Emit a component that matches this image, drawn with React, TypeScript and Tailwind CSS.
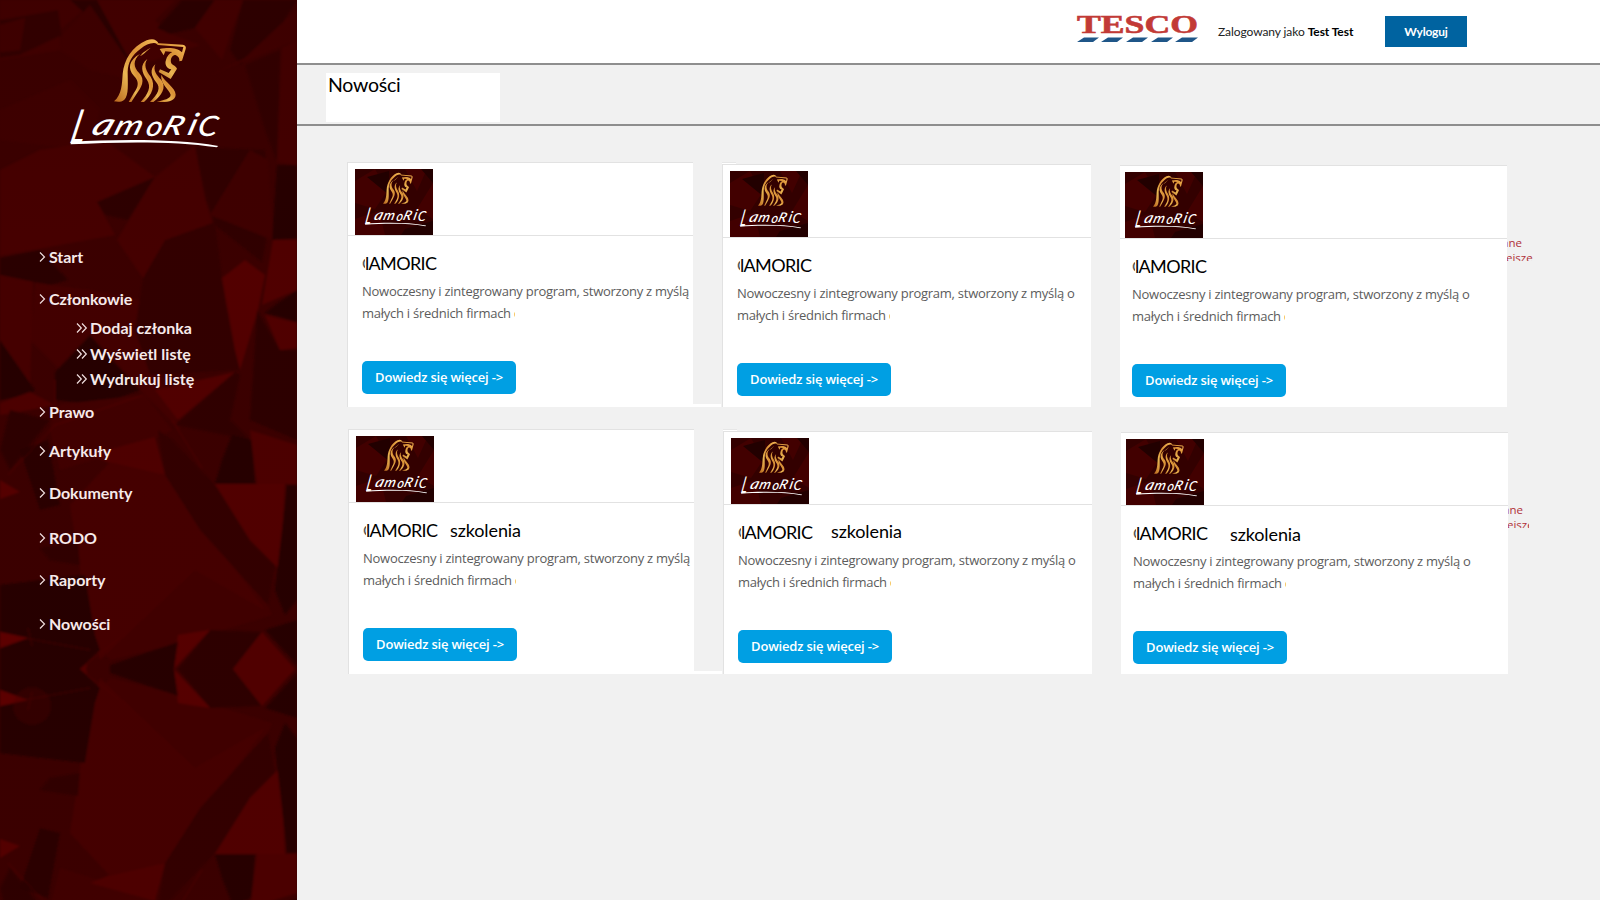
import React from "react";

const FACETS: [string, string][] = [
  ["#450000", "0,0 95,0 60,30 60,50 0,60"],
  ["#2c0000", "0,20 58,10 62,35 20,55 0,58"],
  ["#420000", "0,25 25,18 20,50 0,52"],
  ["#1c0000", "70,0 105,0 125,38 128,60 108,35"],
  ["#4a0000", "97,0 175,0 155,20 165,32 200,45 150,62 127,55"],
  ["#400000", "62,35 90,5 126,58 135,80 90,70 60,50"],
  ["#1f0000", "157,28 182,0 215,0 195,28 170,34"],
  ["#480000", "195,28 215,0 243,0 230,35 222,60"],
  ["#230000", "243,0 297,0 275,35 240,65 230,50"],
  ["#430000", "297,10 297,40 210,75 245,58 280,25"],
  ["#470000", "282,48 297,40 297,165 277,162"],
  ["#2b0000", "245,65 280,50 277,162 265,130"],
  ["#400000", "0,110 70,80 100,110 90,150 0,140"],
  ["#4b0000", "0,170 40,150 105,140 155,177 97,202 115,235 0,256"],
  ["#260000", "97,202 155,177 128,220 105,215"],
  ["#4a0000", "155,177 195,145 205,200 213,225 143,278 117,240"],
  ["#2a0000", "195,147 265,150 270,220 262,262 215,225 205,195"],
  ["#410000", "210,215 250,150 268,160 273,240"],
  ["#1d0000", "277,165 297,165 297,238 272,240"],
  ["#230000", "0,258 40,250 68,280 50,285 0,275"],
  ["#440000", "35,283 90,290 140,300 150,340 180,430 100,350 60,370 30,340"],
  ["#2e0000", "143,278 165,240 215,222 225,300 240,370 150,375 135,330"],
  ["#5c0000", "222,278 245,260 265,275 258,310 240,370 235,350"],
  ["#580000", "273,240 297,240 297,290 262,305"],
  ["#1f0000", "297,290 275,305 265,313 297,322"],
  ["#580000", "265,315 297,323 297,348 280,350"],
  ["#270000", "257,310 280,350 297,350 297,440 250,420"],
  ["#480000", "0,275 33,282 30,390 0,340"],
  ["#1e0000", "0,340 35,390 30,395 0,400"],
  ["#520000", "0,403 30,392 55,405 30,410 0,415"],
  ["#1f0000", "55,372 90,335 140,390 100,405 55,400"],
  ["#5a0000", "155,390 235,372 178,420"],
  ["#290000", "235,372 240,375 230,420 250,440 175,425"],
  ["#420000", "55,405 145,395 172,430 140,445 60,470 50,430"],
  ["#250000", "10,410 50,420 10,470 0,450"],
  ["#230000", "20,450 48,440 60,505 40,510"],
  ["#560000", "90,455 155,437 165,475 115,465"],
  ["#600000", "0,480 20,492 0,499"],
  ["#420000", "165,475 200,530 268,605 272,615 190,640 110,660 80,620 120,560"],
  ["#4a0000", "70,505 110,462 165,475 265,610 195,570 100,660 85,600"],
  ["#2e0000", "158,430 172,440 215,485 275,565 268,605 200,530 165,475"],
  ["#5a0000", "215,484 255,484 285,484 280,570 250,540"],
  ["#1f0000", "232,435 252,440 255,484 215,484 222,460"],
  ["#520000", "250,430 297,445 297,484 257,484"],
  ["#1d0000", "287,485 297,485 297,600 285,615 275,590"],
  ["#2a0000", "40,548 78,542 80,565 50,560"],
  ["#1b0000", "0,585 85,575 95,635 100,650 80,669 0,669"],
  ["#6c0000", "0,632 28,638 0,648"],
  ["#260000", "210,630 262,632 235,669 178,669"],
  ["#620000", "178,635 210,630 174,669"],
  ["#1f0000", "110,665 178,642 174,669 110,669"],
  ["#5a0000", "262,632 295,669 233,669"],
  ["#1e0000", "265,630 297,620 297,665"],
  ["#5a0000", "80,669 140,622 88,662 86,669"],
];

function Facets() {
  return (
    <>
      {FACETS.map(([fill, points], i) => (
        <polygon key={i} fill={fill} points={points} />
      ))}
      <g stroke="#780000" strokeWidth="0.7" opacity="0.6" fill="none">
        <path d="M8 475 55 425 143 395M172 420l30 48M25 638l65 12M55 405l0-25M28 628l4 18" />
      </g>
    </>
  );
}

function SidebarBackground() {
  return (
    <svg className="absolute inset-0" width="297" height="900" viewBox="0 0 297 900" aria-hidden="true">
      <defs>
        <filter id="soft" x="0" y="0" width="1" height="1">
          <feGaussianBlur stdDeviation="1.3" />
        </filter>
        <linearGradient id="shade" x1="0" y1="0" x2="0" y2="1">
          <stop offset="0" stopColor="#380000" stopOpacity="0.5" />
          <stop offset="0.3" stopColor="#3c0000" stopOpacity="0.3" />
          <stop offset="1" stopColor="#3c0000" stopOpacity="0.35" />
        </linearGradient>
      </defs>
      <rect width="297" height="900" fill="#3a0000" />
      <g filter="url(#soft)">
        <Facets />
        <g transform="translate(0 1338) scale(1 -1)">
          <Facets />
        </g>
        <circle cx="32" cy="706" r="19" fill="#500000" opacity="0.35" />
      </g>
      <rect width="297" height="900" fill="url(#shade)" />
    </svg>
  );
}

const WORDMARK: { ch: string; size: number; place: string }[] = [
  { ch: "L", size: 140, place: "translate(207 430) skewX(-14) scale(.62 1)" },
  { ch: "a", size: 92, place: "translate(270 406) skewX(-22) scale(1.3 1)" },
  { ch: "m", size: 84, place: "translate(338 406) skewX(-18) scale(1.25 1)" },
  { ch: "o", size: 84, place: "translate(434 408) skewX(-12) scale(1.12 1)" },
  { ch: "R", size: 80, place: "translate(482 406) skewX(-20) scale(1.28 1)" },
  { ch: "i", size: 92, place: "translate(559 406) skewX(-16) scale(1.15 1)" },
  { ch: "C", size: 84, place: "translate(590 408) skewX(-10) scale(1.12 1)" },
];

function LogoArt() {
  return (
    <>
      <g fill="url(#gold)">
        <path d="M342 304C366 284 366 250 368 222C372 180 395 140 440 121C458 114 470 118 476 131C455 125 440 132 422 146C395 165 384 188 383 215C383 250 387 285 373 299C364 307 352 306 342 304Z" />
        <path d="M466 129L548 134Q560 136 557 147L546 182L538 184C540 172 530 165 524 165C514 168 510 180 514 190C518 197 526 196 531 206L512 237L476 216L480 208L506 219L514 208C500 206 493 192 498 180C500 170 508 160 517 156L496 154L491 166L479 147C500 143 530 141 546 157L550 141L474 135Z" />
        <path d="M420 162C398 180 400 202 418 220C436 240 426 262 408 284L394 306L386 306L402 278C416 260 418 244 402 228C382 206 386 180 420 162Z" />
        <path d="M452 143C424 158 412 176 428 164Z" />
        <path d="M442 177C430 194 438 212 452 230C468 256 456 284 432 306L422 306C444 282 456 262 440 238C426 218 418 194 442 177Z" />
        <path d="M466 193C458 210 470 226 484 240C500 262 486 286 460 306L450 306C474 282 484 264 468 246C454 228 448 208 466 193Z" />
        <path d="M484 224C494 246 526 262 527 284C526 306 496 307 470 305C492 300 512 296 512 284C508 268 480 252 484 224Z" />
      </g>
      <g fill="#ffffff" fontFamily="Lato, sans-serif" fontStyle="italic" fontWeight="500">
        {WORDMARK.map((l) => (
          <text key={l.ch} fontSize={l.size} transform={l.place}>
            {l.ch}
          </text>
        ))}
      </g>
      <path fill="#ffffff" d="M212 425C350 419 520 415 655 438L650 442C520 422 350 426 212 433Z" />
    </>
  );
}

function GoldDefs() {
  return (
    <defs>
      <linearGradient id="gold" x1="0" y1="1" x2="1" y2="0">
        <stop offset="0" stopColor="#b8651c" />
        <stop offset="0.35" stopColor="#eab653" />
        <stop offset="0.6" stopColor="#d98f35" />
        <stop offset="1" stopColor="#f6bb58" />
      </linearGradient>
    </defs>
  );
}

function Logo() {
  return (
    <svg className="relative block h-[160px] w-[297px]" viewBox="0 0 891 480" role="img">
      <GoldDefs />
      <LogoArt />
    </svg>
  );
}

function Thumb() {
  return (
    <svg className="block h-[66px] w-[78px] shrink-0" viewBox="0 0 78 66" role="img">
      <rect width="78" height="66" fill="#330000" />
      <path fill="#420000" d="M0 12 20 0 32 22 20 40 0 34ZM50 0H72L62 22ZM78 14V50L62 40ZM0 50 24 42 30 66H0Z" />
      <path fill="#220000" d="M12 8 34 2 34 26ZM66 0H78V14ZM50 60 78 52V66H46Z" />
      <g transform="translate(-19 -15.700) scale(.1375 .1650)">
        <LogoArt />
      </g>
    </svg>
  );
}

const NAV: { label: string; sub?: boolean; cls: string }[] = [
  { label: "Start", cls: "mt-[87px] pl-[39px]" },
  { label: "Członkowie", cls: "mt-[22px] pl-[39px]" },
  { label: "Dodaj członka", sub: true, cls: "mt-[9px] pl-[76px]" },
  { label: "Wyświetl listę", sub: true, cls: "mt-[6px] pl-[76px]" },
  { label: "Wydrukuj listę", sub: true, cls: "mt-[5px] pl-[76px]" },
  { label: "Prawo", cls: "mt-[13px] pl-[39px]" },
  { label: "Artykuły", cls: "mt-[19px] pl-[39px]" },
  { label: "Dokumenty", cls: "mt-[22px] pl-[39px]" },
  { label: "RODO", cls: "mt-[25px] pl-[39px]" },
  { label: "Raporty", cls: "mt-[22px] pl-[39px]" },
  { label: "Nowości", cls: "mt-[24px] pl-[39px]" },
];

function Sidebar() {
  return (
    <aside className="relative h-[900px] w-[297px] shrink-0 overflow-hidden">
      <SidebarBackground />
      <Logo />
      <nav className="relative flex flex-col">
        {NAV.map((item) => (
          <a key={item.label} className={"flex h-5 items-center " + item.cls}>
            {item.sub ? (
              <svg className="w-[14px] shrink-0" height="10" viewBox="0 0 14 10" fill="none" stroke="#f0dede" strokeWidth="1.2">
                <path d="M1 .5 5.3 5 1 9.5M6 .5 10.3 5 6 9.5" />
              </svg>
            ) : (
              <svg className="w-[10px] shrink-0" height="10" viewBox="0 0 10 10" fill="none" stroke="#f0dede" strokeWidth="1.2">
                <path d="M1 .5 5.5 5 1 9.5" />
              </svg>
            )}
            <span
              className={
                "text-[16px] leading-5 font-bold whitespace-nowrap text-[#f6eaea] " +
                (item.sub ? "tracking-[0.03px]" : "tracking-[-0.08px]")
              }
            >
              {item.label}
            </span>
          </a>
        ))}
      </nav>
    </aside>
  );
}

function TescoLogo() {
  return (
    <svg className="block h-[30px] w-[124px]" viewBox="0 0 124 30" role="img">
      <text x="1" y="17.800" fontFamily="'Liberation Serif', serif" fontWeight="700" fontSize="26" fill="#c23a36" stroke="#c23a36" strokeWidth="0.6" textLength="121" lengthAdjust="spacingAndGlyphs">
        TESCO
      </text>
      <path fill="#1f5688" d="M8 22.500H23L17 27H1ZM32 22.500H47L41 27H25ZM57 22.500H72L66 27H50ZM82 22.500H97L91 27H75ZM106 22.500H122L116 27H99Z" />
    </svg>
  );
}

function Header() {
  return (
    <header className="flex h-[65px] items-start border-b-2 border-[#8e8e8e] bg-white pl-[779px]">
      <div className="pt-[15px]">
        <TescoLogo />
      </div>
      <p className="ml-[18px] w-[167px] pt-[22px] text-[12px] leading-5 tracking-[-0.08px] whitespace-nowrap text-[#222]">
        Zalogowany jako <b className="text-black">Test Test</b>
      </p>
      <button className="mt-4 h-[31px] w-[82px] bg-[#0063a0] text-[12px] leading-[31px] font-bold tracking-[-0.2px] text-white">Wyloguj</button>
    </header>
  );
}

type CardProps = {
  size: string;
  media: string;
  body: string;
  end?: string;
  extra?: string;
  gap?: string;
};

function Card({ size, media, body, end, extra, gap }: CardProps) {
  return (
    <article className={"shrink-0 overflow-hidden border-t border-[#e2e2e2] bg-white " + size}>
      <div className={"border-b border-[#e2e2e2] pt-[6px] " + media}>
        <Thumb />
      </div>
      <div className={body}>
        <div className="mt-[17px] flex h-5 text-[18px] leading-5 whitespace-nowrap text-black">
          <span className="w-[3px] overflow-hidden text-[16px] text-[#555]">C</span>
          <h2 className="w-[72px] tracking-[-0.65px]">lAMORIC</h2>
          {extra && <span className={"tracking-[-0.1px] " + gap}>{extra}</span>}
        </div>
        <p className="mt-[7px] font-['Open_Sans',sans-serif] text-[13px] leading-[22px] tracking-[-0.26px] whitespace-nowrap text-[#5c5c5c]">
          Nowoczesny i zintegrowany program, stworzony z myślą{end}
          <br />
          <span className="flex">
            małych i średnich firmach
            <span className="ml-[3px] w-[1.5px] overflow-hidden text-[#e0a050]">o</span>
          </span>
        </p>
        <button className="mt-[37px] block h-[33px] w-[154px] rounded-[5px] bg-[#009fe3] font-['Open_Sans',sans-serif] text-[13px] leading-[33px] font-semibold tracking-[-0.2px] text-white">
          Dowiedz się więcej -&gt;
        </button>
      </div>
    </article>
  );
}

function Row({ cls, second }: { cls: string; second?: boolean }) {
  const extra = second ? "szkolenia" : undefined;
  return (
    <section className={"flex h-[245px] items-end " + cls}>
      <Card size="h-[245px] w-[346px] border-l" media="pl-[7px]" body="pl-[14px]" extra={extra} gap="ml-[12px]" />
      <div className="mr-px h-[3px] w-[28px] shrink-0 bg-white" />
      <div className="flex shrink-0 flex-col">
        <div className="h-[2px] w-[14px] border-t border-[#e6e6e6] bg-white" />
        <Card size="h-[243px] w-[369px] border-l" media="pl-[7px]" body="pl-[14px]" end=" o" extra={extra} gap="-mt-px ml-[18px]" />
      </div>
      <div className="ml-[29px] shrink-0">
        <Card size="h-[242px] w-[387px]" media="pl-[5px]" body="pl-[12px]" end=" o" extra={extra} gap="mt-px ml-[22px]" />
      </div>
      <p
        className={
          "mt-[73px] h-[26px] shrink-0 self-start overflow-hidden font-['Open_Sans',sans-serif] text-[11.5px] leading-[15px] whitespace-nowrap text-[#b03038] " +
          (second ? "w-[21px]" : "w-[30px]")
        }
      >
        <span className="-ml-[5px] block">ane</span>
        <span className="-ml-[1px] block">ejsze</span>
      </p>
    </section>
  );
}

export default function App() {
  return (
    <div className="flex h-[900px] w-[1600px] overflow-hidden bg-[#f1f1f1] font-[Lato,sans-serif]">
      <Sidebar />
      <main className="min-w-0 flex-1">
        <Header />
        <div className="h-[61px] border-b-2 border-[#8e8e8e] pt-[8px] pl-[29px]">
          <h1 className="h-[49px] w-[174px] bg-white pt-[2px] pl-[2px] text-[19.5px] leading-[20px] tracking-[-0.25px] text-black">Nowości</h1>
        </div>
        <Row cls="mt-[36px] ml-[50px]" />
        <Row cls="mt-[22px] ml-[51px]" second />
      </main>
    </div>
  );
}
